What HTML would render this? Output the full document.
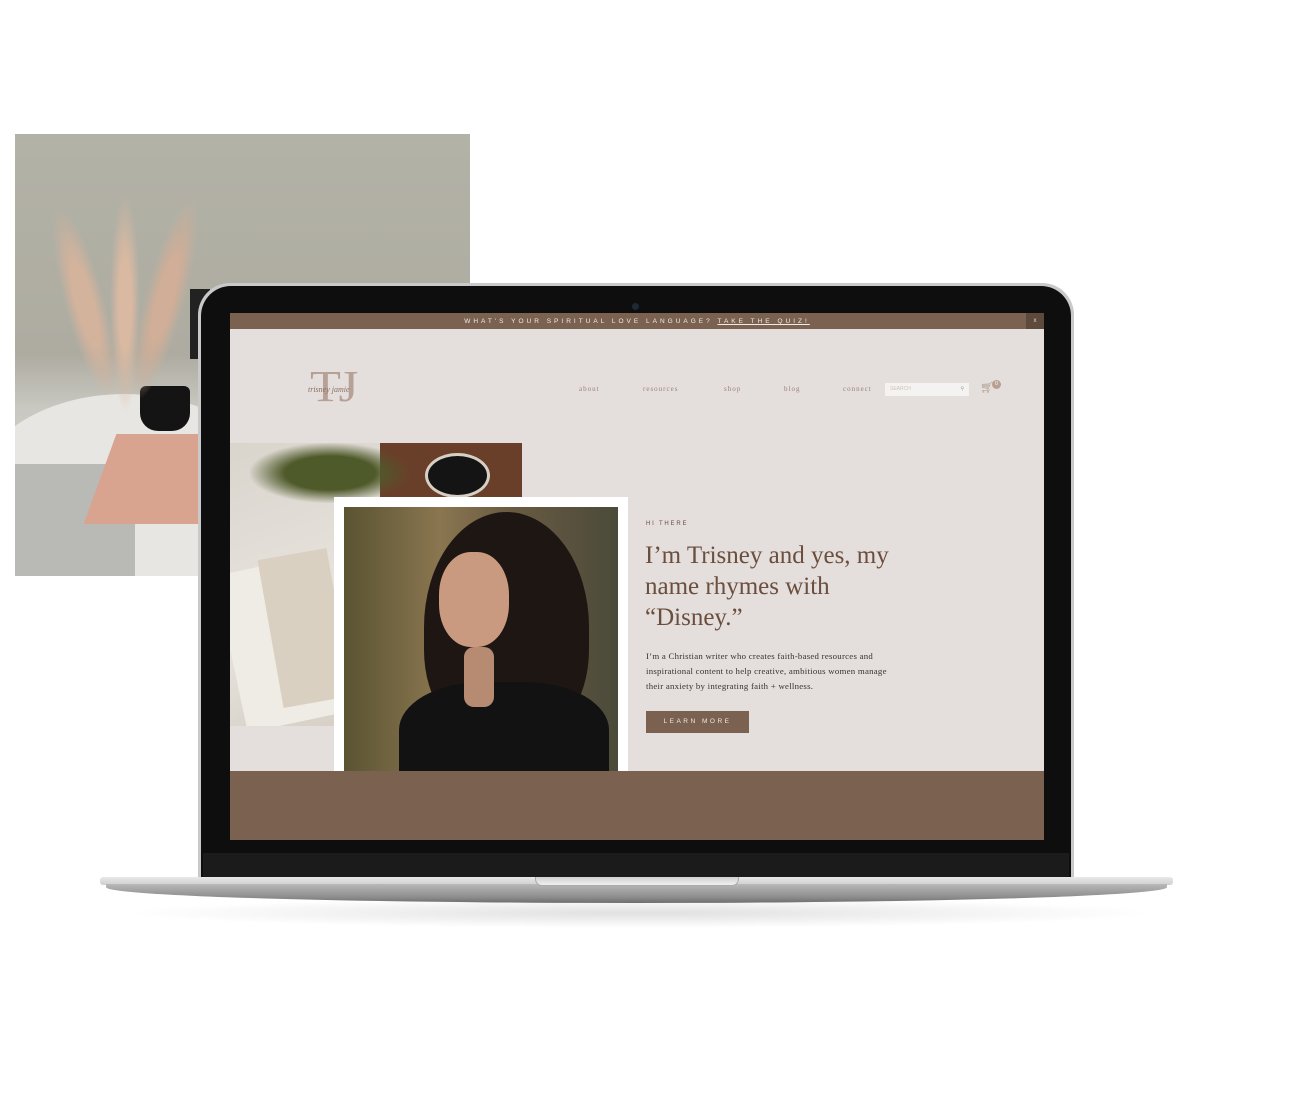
<!DOCTYPE html>
<html><head><meta charset="utf-8"><style>
*{margin:0;padding:0;box-sizing:border-box}
body{width:1300px;height:1110px;background:#fff;position:relative;overflow:hidden;font-family:"Liberation Sans",sans-serif}
.a{position:absolute}
.n{position:absolute;top:72px;font-family:'Liberation Serif',serif;font-size:7px;color:#9c8176;letter-spacing:1px}
</style></head><body>
<div class="a" style="left:15px;top:134px;width:455px;height:442px;background:linear-gradient(180deg,#b3b2a7 0%,#aeaca1 50%,#c9c8c1 62%,#d6d6d2 100%);overflow:hidden">
  <div class="a" style="left:-40px;top:260px;width:300px;height:200px;border-radius:50%;background:#e8e6e2"></div>
  <div class="a" style="left:0;top:330px;width:120px;height:112px;background:#b9b9b6"></div>
  <div class="a" style="left:85px;top:300px;width:120px;height:90px;background:#d8a38f;transform:skewX(-20deg)"></div>
  <div class="a" style="left:125px;top:252px;width:50px;height:45px;background:#141414;border-radius:6px 6px 18px 18px"></div>
  <div class="a" style="left:95px;top:60px;width:30px;height:220px;background:radial-gradient(ellipse,#d9b9a2 30%,transparent 70%)"></div>
  <div class="a" style="left:50px;top:70px;width:40px;height:200px;background:radial-gradient(ellipse,#d4b39c 30%,transparent 70%);transform:rotate(-15deg)"></div>
  <div class="a" style="left:130px;top:60px;width:40px;height:210px;background:radial-gradient(ellipse,#d0ae97 30%,transparent 70%);transform:rotate(15deg)"></div>
  <div class="a" style="left:175px;top:155px;width:20px;height:70px;background:#222"></div>
</div>
<div class="a" style="left:120px;top:898px;width:1040px;height:30px;border-radius:50%;background:radial-gradient(ellipse,rgba(0,0,0,.12),transparent 70%)"></div>
<div class="a" style="left:198px;top:283px;width:876px;height:597px;border-radius:32px 32px 0 0;background:#c9c9c9"></div>
<div class="a" style="left:201px;top:286px;width:870px;height:594px;border-radius:30px 30px 0 0;background:#0e0e0e"></div>
<div class="a" style="left:203px;top:853px;width:866px;height:25px;background:#1b1b1b"></div>
<div class="a" style="left:632px;top:303px;width:7px;height:7px;border-radius:50%;background:#1d2a36"></div>
<div class="a" style="left:100px;top:877px;width:1073px;height:8px;background:linear-gradient(#e8e8e8,#cfcfcf);border-radius:3px"></div>
<div class="a" style="left:106px;top:884px;width:1061px;height:19px;background:linear-gradient(#b9b9b9,#8c8c8c 70%,#6e6e6e);border-radius:0 0 60% 60%/0 0 100% 100%"></div>
<div class="a" style="left:535px;top:877px;width:204px;height:9px;background:linear-gradient(#d0d0d0,#f0f0f0);border-radius:0 0 7px 7px;border:1px solid #aaa;border-top:none"></div>
<div class="a" style="left:230px;top:313px;width:814px;height:527px;background:#e4dfdc;overflow:hidden">
  <div class="a" style="left:0;top:0;width:814px;height:16px;background:#7a6150;color:#f2ece8;font-size:6.5px;letter-spacing:3px;text-align:center;line-height:17px">WHAT'S YOUR SPIRITUAL LOVE LANGUAGE? <u>TAKE THE QUIZ!</u></div>
  <div class="a" style="left:796px;top:0;width:18px;height:16px;background:#5e4a3c;color:#ddd;font-size:6px;text-align:center;line-height:16px">x</div>
  <div class="a" style="left:80px;top:52px;font-family:'Liberation Serif',serif;font-size:44px;color:#b7a096;letter-spacing:-2px;line-height:44px;transform:scaleX(1.15);transform-origin:left">TJ</div>
  <div class="a" style="left:78px;top:72px;font-family:'Liberation Serif',serif;font-style:italic;font-size:8px;color:#8a6f62">trisney jamie</div>
  <div class="n" style="left:349px">about</div>
  <div class="n" style="left:413px">resources</div>
  <div class="n" style="left:494px">shop</div>
  <div class="n" style="left:554px">blog</div>
  <div class="n" style="left:613px">connect</div>
  <div class="a" style="left:655px;top:70px;width:84px;height:13px;background:#f5f3f2;font-size:5px;color:#cdbfb8;padding:3px 5px">SEARCH<span style="float:right;color:#999">⚲</span></div>
  <div class="a" style="left:750px;top:68px;font-size:11px;color:#b3a096">🛒︎</div>
  <div class="a" style="left:762px;top:67px;width:9px;height:9px;border-radius:50%;background:#b8a093;color:#fff;font-size:5px;text-align:center;line-height:9px">0</div>
  <div class="a" style="left:0;top:130px;width:292px;height:283px;background:linear-gradient(160deg,#d9d4cc 0%,#e8e4de 50%,#cdc6ba 100%);overflow:hidden">
    <div class="a" style="left:150px;top:0;width:142px;height:55px;background:#6a3f2a"></div>
    <div class="a" style="left:195px;top:10px;width:65px;height:45px;border-radius:50%;background:#141414;border:3px solid #d6d0c4"></div>
    <div class="a" style="left:20px;top:0;width:160px;height:60px;background:radial-gradient(ellipse,#4f5a2a 40%,transparent 72%)"></div>
    <div class="a" style="left:0;top:120px;width:110px;height:160px;background:#efece6;transform:rotate(-12deg)"></div>
    <div class="a" style="left:40px;top:110px;width:70px;height:150px;background:#d9d0c2;transform:rotate(-10deg)"></div>
  </div>
  <div class="a" style="left:104px;top:184px;width:294px;height:280px;background:#fff"></div>
  <div class="a" style="left:114px;top:194px;width:274px;height:270px;background:linear-gradient(90deg,#5a5332 0%,#8a7650 35%,#6a5b42 60%,#4b4a3a 100%);overflow:hidden">
    <div class="a" style="left:80px;top:5px;width:165px;height:230px;border-radius:50% 50% 40% 40%;background:#1e1612"></div>
    <div class="a" style="left:95px;top:45px;width:70px;height:95px;border-radius:45%;background:#c99a80"></div>
    <div class="a" style="left:55px;top:175px;width:210px;height:120px;border-radius:40% 40% 0 0;background:#131212"></div>
    <div class="a" style="left:120px;top:140px;width:30px;height:60px;background:#b78a72;border-radius:10px"></div>
  </div>
  <div class="a" style="left:416px;top:208px;font-size:6px;letter-spacing:1.8px;color:#6b4e3d">HI THERE</div>
  <div class="a" style="left:415px;top:227px;font-family:'Liberation Serif',serif;font-size:25px;line-height:31px;color:#6b4e3d;width:285px">I’m Trisney and yes, my name rhymes with “Disney.”</div>
  <div class="a" style="left:416px;top:336px;font-family:'Liberation Serif',serif;font-size:8.8px;letter-spacing:.25px;line-height:15px;color:#333;width:320px;white-space:nowrap">I’m a Christian writer who creates faith-based resources and<br>inspirational content to help creative, ambitious women manage<br>their anxiety by integrating faith + wellness.</div>
  <div class="a" style="left:416px;top:398px;width:103px;height:22px;background:#7a6150;color:#f0e8e4;font-size:6.5px;letter-spacing:2.5px;text-align:center;line-height:22px">LEARN MORE</div>
  <div class="a" style="left:0;top:458px;width:814px;height:69px;background:#7a6150"></div>
</div>
</body></html>
